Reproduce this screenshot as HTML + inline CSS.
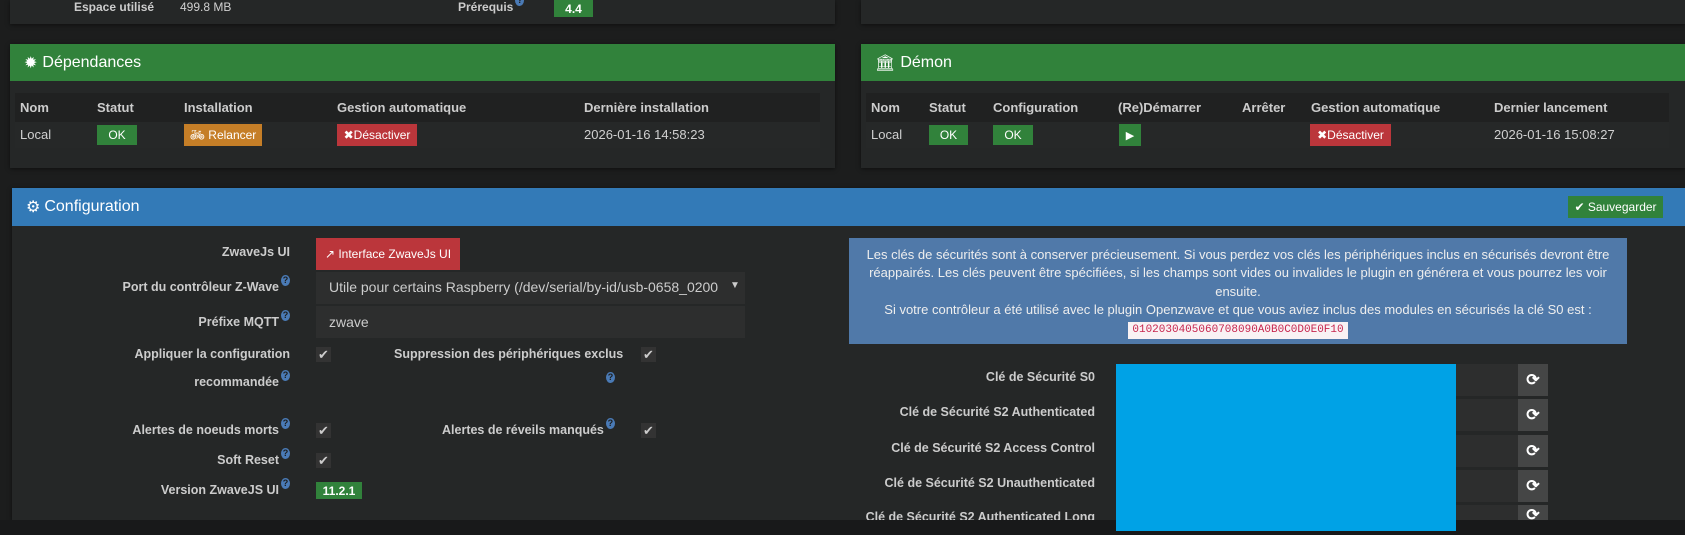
<!DOCTYPE html>
<html><head><meta charset="utf-8"><style>
*{box-sizing:border-box;margin:0;padding:0}
body{width:1685px;height:535px;background:#1c1d1d;font-family:"Liberation Sans",sans-serif;color:#d0d0d0;font-size:13px;position:relative;overflow:hidden}
.a{position:absolute;white-space:nowrap}
.panel{position:absolute;background:#252727;box-shadow:0 1px 4px rgba(0,0,0,.5)}
.hdr{position:absolute;color:#fff;font-size:16px;display:flex;align-items:center;padding-left:14px}
.tbl{position:absolute;background:#202121}
.b{position:absolute;color:#fff;font-size:12px;display:flex;align-items:center;justify-content:center}
.lbl{position:absolute;font-weight:bold;font-size:12.5px;color:#ccc;text-align:right;white-space:nowrap}
.q{display:inline-block;width:9px;height:11px;border-radius:50%;background:#4a7ab5;color:#1c1d1d;font-size:9px;font-weight:bold;text-align:center;line-height:11px;vertical-align:top;margin-left:2px;position:relative;top:-5px}
.chk{position:absolute;width:15px;height:15px;background:#333;color:#ccc;font-size:13px;line-height:15px;text-align:center}
.th{font-weight:bold;color:#ccc}
</style></head><body>
<div class="panel" style="left:10px;top:0;width:825px;height:24px"></div>
<div class="panel" style="left:861px;top:0;width:824px;height:24px"></div>
<div class="a th" style="left:74px;top:0;font-size:12px">Espace utilisé</div>
<div class="a" style="left:180px;top:0;font-size:12px">499.8 MB</div>
<div class="a th" style="left:458px;top:0;font-size:12px">Prérequis<span class="q">?</span></div>
<div class="b" style="left:554px;top:0;width:39px;height:17px;background:#31823b;font-weight:bold">4.4</div>

<div class="panel" style="left:10px;top:44px;width:825px;height:124px"></div>
<div class="hdr" style="left:10px;top:44px;width:825px;height:37px;background:#31823b"><span style="margin-right:5px">✹</span>Dépendances</div>
<div class="tbl" style="left:15px;top:93px;width:805px;height:55px"></div>
<div class="tbl" style="left:15px;top:122px;width:805px;height:26px;background:#262828"></div>
<div class="a th" style="left:20px;top:100px">Nom</div>
<div class="a th" style="left:97px;top:100px">Statut</div>
<div class="a th" style="left:184px;top:100px">Installation</div>
<div class="a th" style="left:337px;top:100px">Gestion automatique</div>
<div class="a th" style="left:584px;top:100px">Dernière installation</div>
<div class="a" style="left:20px;top:127px">Local</div>
<div class="b" style="left:97px;top:125px;width:40px;height:20px;background:#31823b">OK</div>
<div class="b" style="left:184px;top:124px;width:78px;height:22px;background:#c57e27">🚲︎ Relancer</div>
<div class="b" style="left:337px;top:124px;width:80px;height:22px;background:#bb363b">✖Désactiver</div>
<div class="a" style="left:584px;top:127px">2026-01-16 14:58:23</div>

<div class="panel" style="left:861px;top:44px;width:824px;height:124px"></div>
<div class="hdr" style="left:861px;top:44px;width:824px;height:37px;background:#31823b"><span style="margin-right:5px">🏛︎</span>Démon</div>
<div class="tbl" style="left:866px;top:93px;width:803px;height:55px"></div>
<div class="tbl" style="left:866px;top:122px;width:803px;height:26px;background:#262828"></div>
<div class="a th" style="left:871px;top:100px">Nom</div>
<div class="a th" style="left:929px;top:100px">Statut</div>
<div class="a th" style="left:993px;top:100px">Configuration</div>
<div class="a th" style="left:1118px;top:100px">(Re)Démarrer</div>
<div class="a th" style="left:1242px;top:100px">Arrêter</div>
<div class="a th" style="left:1311px;top:100px">Gestion automatique</div>
<div class="a th" style="left:1494px;top:100px">Dernier lancement</div>
<div class="a" style="left:871px;top:127px">Local</div>
<div class="b" style="left:929px;top:125px;width:39px;height:20px;background:#31823b">OK</div>
<div class="b" style="left:993px;top:125px;width:40px;height:20px;background:#31823b">OK</div>
<div class="b" style="left:1119px;top:124px;width:22px;height:22px;background:#31823b;font-size:11px">▶</div>
<div class="b" style="left:1310px;top:124px;width:81px;height:22px;background:#bb363b">✖Désactiver</div>
<div class="a" style="left:1494px;top:127px">2026-01-16 15:08:27</div>

<div class="panel" style="left:12px;top:188px;width:1673px;height:332px;overflow:hidden">
</div>
<div class="hdr" style="left:12px;top:188px;width:1673px;height:38px;background:#337ab7"><span style="margin-right:4px">⚙︎</span>Configuration</div>
<div class="b" style="left:1568px;top:196px;width:95px;height:22px;background:#31823b">✔ Sauvegarder</div>

<div class="lbl" style="right:1395px;top:245px">ZwaveJs UI</div>
<div class="b" style="left:316px;top:238px;width:144px;height:32px;background:#bb363b">↗ Interface ZwaveJs UI</div>
<div class="lbl" style="right:1395px;top:280px">Port du contrôleur Z-Wave<span class="q">?</span></div>
<div class="a" style="left:316px;top:272px;width:429px;height:32px;background:#2d2e2e;color:#ccc;font-size:14px;padding:7px 0 0 13px;overflow:hidden">Utile pour certains Raspberry (/dev/serial/by-id/usb-0658_0200</div>
<div class="a" style="left:730px;top:280px;font-size:10px;color:#ccc">▼</div>
<div class="lbl" style="right:1395px;top:315px">Préfixe MQTT<span class="q">?</span></div>
<div class="a" style="left:316px;top:306px;width:429px;height:32px;background:#2d2e2e;color:#ccc;font-size:14px;padding:8px 0 0 13px">zwave</div>
<div class="lbl" style="right:1395px;top:347px">Appliquer la configuration</div>
<div class="lbl" style="right:1395px;top:375px">recommandée<span class="q">?</span></div>
<div class="chk" style="left:316px;top:347px">✔</div>
<div class="lbl" style="left:394px;top:347px">Suppression des périphériques exclus</div>
<div class="a" style="left:604px;top:372px"><span class="q" style="top:0">?</span></div>
<div class="chk" style="left:641px;top:347px">✔</div>
<div class="lbl" style="right:1395px;top:423px">Alertes de noeuds morts<span class="q">?</span></div>
<div class="chk" style="left:316px;top:423px">✔</div>
<div class="lbl" style="left:442px;top:423px">Alertes de réveils manqués<span class="q">?</span></div>
<div class="chk" style="left:641px;top:423px">✔</div>
<div class="lbl" style="right:1395px;top:453px">Soft Reset<span class="q">?</span></div>
<div class="chk" style="left:316px;top:453px">✔</div>
<div class="lbl" style="right:1395px;top:483px">Version ZwaveJS UI<span class="q">?</span></div>
<div class="b" style="left:316px;top:482px;width:46px;height:17px;background:#31823b;font-weight:bold">11.2.1</div>

<div class="a" style="left:849px;top:238px;width:778px;height:106px;background:#5079a9;color:#eee;font-size:13px;text-align:center;line-height:18.3px;white-space:normal;padding:8px 10px 0">Les clés de sécurités sont à conserver précieusement. Si vous perdez vos clés les périphériques inclus en sécurisés devront être réappairés. Les clés peuvent être spécifiées, si les champs sont vides ou invalides le plugin en générera et vous pourrez les voir ensuite.<br>Si votre contrôleur a été utilisé avec le plugin Openzwave et que vous aviez inclus des modules en sécurisés la clé S0 est :<br><span style="display:inline-block;background:#f9f2f4;color:#c7254e;font-family:'Liberation Mono',monospace;font-size:11px;padding:0 4px;line-height:17px;margin-top:1px">0102030405060708090A0B0C0D0E0F10</span></div>

<div class="lbl" style="right:590px;top:370px">Clé de Sécurité S0</div>
<div class="lbl" style="right:590px;top:405px">Clé de Sécurité S2 Authenticated</div>
<div class="lbl" style="right:590px;top:441px">Clé de Sécurité S2 Access Control</div>
<div class="lbl" style="right:590px;top:476px">Clé de Sécurité S2 Unauthenticated</div>
<div class="lbl" style="right:590px;top:510px">Clé de Sécurité S2 Authenticated Long</div>
<div class="a" style="left:1116px;top:364px;width:402px;height:32px;background:#2d2e2e"></div>
<div class="a" style="left:1116px;top:399px;width:402px;height:32px;background:#2d2e2e"></div>
<div class="a" style="left:1116px;top:435px;width:402px;height:32px;background:#2d2e2e"></div>
<div class="a" style="left:1116px;top:470px;width:402px;height:32px;background:#2d2e2e"></div>
<div class="a" style="left:1116px;top:505px;width:402px;height:15px;background:#2d2e2e"></div>
<div class="b" style="left:1518px;top:364px;width:30px;height:32px;background:#454646;font-size:16px;font-weight:bold">⟳</div>
<div class="b" style="left:1518px;top:399px;width:30px;height:32px;background:#454646;font-size:16px;font-weight:bold">⟳</div>
<div class="b" style="left:1518px;top:435px;width:30px;height:32px;background:#454646;font-size:16px;font-weight:bold">⟳</div>
<div class="b" style="left:1518px;top:470px;width:30px;height:32px;background:#454646;font-size:16px;font-weight:bold">⟳</div>
<div class="b" style="left:1518px;top:505px;width:30px;height:15px;background:#454646;font-size:16px;font-weight:bold;overflow:hidden;align-items:flex-start">⟳</div>
<div class="a" style="left:0;top:520px;width:1685px;height:15px;background:#18191a"></div>
<div class="a" style="left:1116px;top:364px;width:340px;height:167px;background:#00a2e6"></div>
</body></html>
